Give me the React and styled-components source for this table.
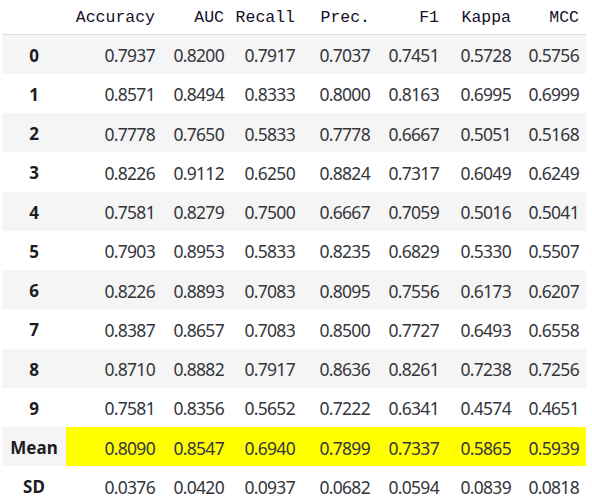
import React from "react";
import styled, { createGlobalStyle } from "styled-components";

const GlobalStyle = createGlobalStyle`
  html, body {
    margin: 0;
    padding: 0;
    background: #ffffff;
  }
`;

const Wrapper = styled.div`
  padding-left: 2px;
`;

const Table = styled.table`
  border-collapse: collapse;
  border-spacing: 0;
  table-layout: fixed;
  width: 584px;
`;

const HeadCell = styled.th`
  height: 34px;
  padding: 0 7px 0 0;
  border-bottom: 1px solid #dcdcdc;
  text-align: right;
  font-family: "Liberation Mono", "DejaVu Sans Mono", monospace;
  font-size: 16.5px;
  font-weight: normal;
  color: #140f2a;
  vertical-align: middle;
`;

const Row = styled.tr`
  height: 39.25px;
  background: ${(p) => (p.$striped ? "#f5f5f5" : "#ffffff")};
`;

const IndexCell = styled.th`
  padding: 2px 0 0 0;
  text-align: center;
  font-family: "Noto Sans", "Open Sans", sans-serif;
  font-size: 17px;
  font-weight: 700;
  color: #1c1c22;
  vertical-align: middle;
`;

const Cell = styled.td`
  padding: 2px 7px 0 0;
  text-align: right;
  font-family: "Noto Sans", "Open Sans", sans-serif;
  font-size: 17.5px;
  letter-spacing: -0.7px;
  color: #35363c;
  vertical-align: middle;
  background: ${(p) => (p.$highlight ? "#ffff00" : "transparent")};
`;

const columns = [
  { name: "Accuracy", width: 96 },
  { name: "AUC", width: 69 },
  { name: "Recall", width: 71 },
  { name: "Prec.", width: 75 },
  { name: "F1", width: 69 },
  { name: "Kappa", width: 72 },
  { name: "MCC", width: 68 },
];

const rows = [
  ["0", "0.7937", "0.8200", "0.7917", "0.7037", "0.7451", "0.5728", "0.5756"],
  ["1", "0.8571", "0.8494", "0.8333", "0.8000", "0.8163", "0.6995", "0.6999"],
  ["2", "0.7778", "0.7650", "0.5833", "0.7778", "0.6667", "0.5051", "0.5168"],
  ["3", "0.8226", "0.9112", "0.6250", "0.8824", "0.7317", "0.6049", "0.6249"],
  ["4", "0.7581", "0.8279", "0.7500", "0.6667", "0.7059", "0.5016", "0.5041"],
  ["5", "0.7903", "0.8953", "0.5833", "0.8235", "0.6829", "0.5330", "0.5507"],
  ["6", "0.8226", "0.8893", "0.7083", "0.8095", "0.7556", "0.6173", "0.6207"],
  ["7", "0.8387", "0.8657", "0.7083", "0.8500", "0.7727", "0.6493", "0.6558"],
  ["8", "0.8710", "0.8882", "0.7917", "0.8636", "0.8261", "0.7238", "0.7256"],
  ["9", "0.7581", "0.8356", "0.5652", "0.7222", "0.6341", "0.4574", "0.4651"],
  ["Mean", "0.8090", "0.8547", "0.6940", "0.7899", "0.7337", "0.5865", "0.5939"],
  ["SD", "0.0376", "0.0420", "0.0937", "0.0682", "0.0594", "0.0839", "0.0818"],
];

export default function App() {
  return (
    <Wrapper>
      <GlobalStyle />
      <Table>
        <colgroup>
          <col style={{ width: 64 }} />
          {columns.map((c) => (
            <col key={c.name} style={{ width: c.width }} />
          ))}
        </colgroup>
        <thead>
          <tr>
            <HeadCell />
            {columns.map((c) => (
              <HeadCell key={c.name}>{c.name}</HeadCell>
            ))}
          </tr>
        </thead>
        <tbody>
          {rows.map((r, i) => (
            <Row key={r[0]} $striped={i % 2 === 0}>
              <IndexCell>{r[0]}</IndexCell>
              {r.slice(1).map((v, j) => (
                <Cell key={j} $highlight={r[0] === "Mean"}>
                  {v}
                </Cell>
              ))}
            </Row>
          ))}
        </tbody>
      </Table>
    </Wrapper>
  );
}
